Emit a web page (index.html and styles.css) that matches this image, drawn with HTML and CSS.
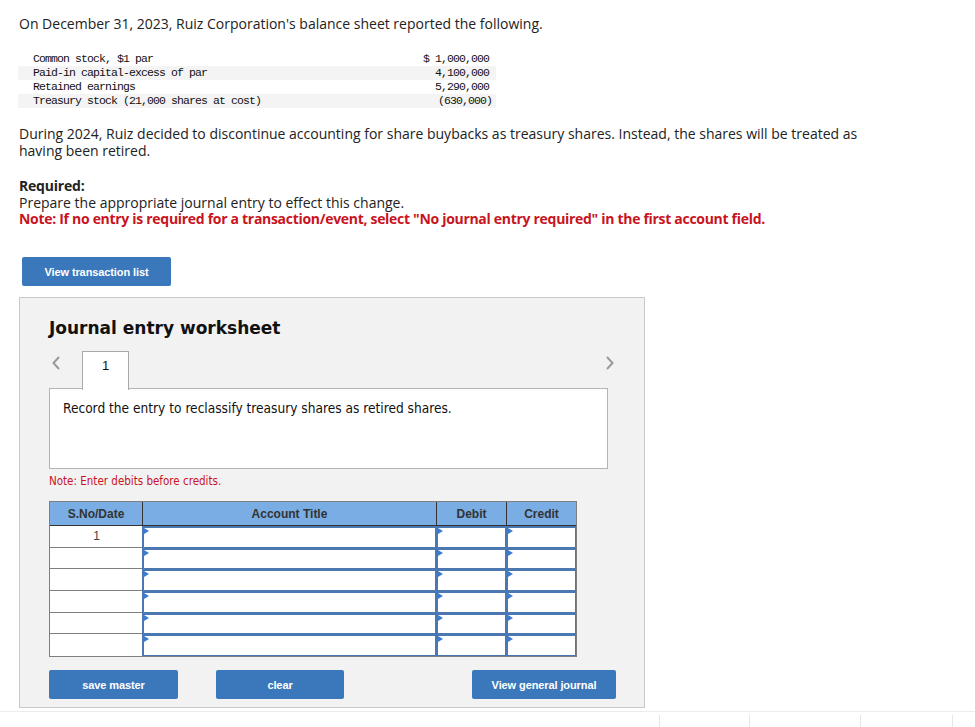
FILE: index.html
```html
<!DOCTYPE html>
<html>
<head>
<meta charset="utf-8">
<link rel="stylesheet" href="styles.css">
</head>
<body>
<div class="page">
  <p class="intro">On December 31, 2023, Ruiz Corporation's balance sheet reported the following.</p>
  <table class="bs">
    <tr><td class="lbl">Common stock, $1 par</td><td class="amt">$ 1,000,000</td></tr>
    <tr class="alt"><td class="lbl">Paid-in capital-excess of par</td><td class="amt">4,100,000</td></tr>
    <tr><td class="lbl">Retained earnings</td><td class="amt">5,290,000</td></tr>
    <tr class="alt"><td class="lbl">Treasury stock (21,000 shares at cost)</td><td class="amt"><span class="neg">(630,000)</span></td></tr>
  </table>
  <p class="para">During 2024, Ruiz decided to discontinue accounting for share buybacks as treasury shares. Instead, the shares will be treated as having been retired.</p>
  <div class="req">
    <p class="req-h">Required:</p>
    <p>Prepare the appropriate journal entry to effect this change.</p>
    <p class="note">Note: If no entry is required for a transaction/event, select "No journal entry required" in the first account field.</p>
  </div>
  <button class="btn btn-list">View transaction list</button>
  <section class="ws">
    <h2 class="ws-title">Journal entry worksheet</h2>
    <div class="nav">
      <svg class="arrow arrow-left" width="10" height="16" viewBox="0 0 10 16"><path d="M8 2 L2.5 8 L8 14" fill="none" stroke="#9a9a9a" stroke-width="2"/></svg>
      <div class="tab">1</div>
      <svg class="arrow arrow-right" width="10" height="16" viewBox="0 0 10 16"><path d="M2 2 L7.5 8 L2 14" fill="none" stroke="#9a9a9a" stroke-width="2"/></svg>
    </div>
    <div class="desc">Record the entry to reclassify treasury shares as retired shares.</div>
    <p class="ws-note">Note: Enter debits before credits.</p>
    <div class="jt">
      <div class="jrow jhead">
        <div class="hc">S.No/Date</div>
        <div class="hc">Account Title</div>
        <div class="hc">Debit</div>
        <div class="hc">Credit</div>
      </div>
      <div class="jrow"><div class="dc">1</div><div class="ic"></div><div class="ic"></div><div class="ic"></div></div>
      <div class="jrow"><div class="dc"></div><div class="ic"></div><div class="ic"></div><div class="ic"></div></div>
      <div class="jrow"><div class="dc"></div><div class="ic"></div><div class="ic"></div><div class="ic"></div></div>
      <div class="jrow"><div class="dc"></div><div class="ic"></div><div class="ic"></div><div class="ic"></div></div>
      <div class="jrow"><div class="dc"></div><div class="ic"></div><div class="ic"></div><div class="ic"></div></div>
      <div class="jrow"><div class="dc"></div><div class="ic"></div><div class="ic"></div><div class="ic"></div></div>
    </div>
    <div class="actions">
      <button class="btn btn-save">save master</button>
      <button class="btn btn-clear">clear</button>
      <button class="btn btn-view">View general journal</button>
    </div>
  </section>
</div>
<div class="footer">
  <div class="fcell f1"></div>
  <div class="fcell f2"></div>
  <div class="fcell f3"></div>
  <div class="fcell f4"></div>
</div>
</body>
</html>
```

FILE: styles.css
```css
html, body {
  margin: 0;
  padding: 0;
  background: #fff;
}
body {
  font-family: "Open Sans", "Liberation Sans", sans-serif;
  color: #222;
}
.page {
  padding: 15px 0 0 19px;
}
p {
  margin: 0;
}
.intro {
  font-size: 14px;
  line-height: 17px;
}
.bs {
  margin-top: 20px;
  border-collapse: collapse;
  width: 478px;
  margin-left: -1px;
  font-family: "Liberation Mono", "DejaVu Sans Mono", monospace;
  font-size: 11.5px;
  letter-spacing: -0.9px;
  color: #111;
}
.bs td {
  padding: 0;
  height: 14px;
  line-height: 14px;
  white-space: pre;
}
.bs .lbl {
  padding-left: 15px;
}
.bs .amt {
  text-align: right;
  padding-right: 7px;
}
.bs .alt td {
  background: #f4f4f4;
}
.neg {
  margin-right: -3px;
}
.para {
  margin-top: 17px;
  width: 870px;
  font-size: 14px;
  line-height: 17px;
}
.req {
  margin-top: 18px;
  font-size: 14px;
  line-height: 17px;
}
.req-h {
  font-weight: bold;
  letter-spacing: -0.2px;
}
.note {
  color: #c8141e;
  font-weight: bold;
  letter-spacing: -0.3px;
  line-height: 16px;
}
.btn {
  display: block;
  flex-shrink: 0;
  border: none;
  border-radius: 2px;
  background: #3b77bb;
  color: #fff;
  font-family: "Liberation Sans", Arial, sans-serif;
  font-weight: bold;
  font-size: 11px;
  letter-spacing: -0.1px;
  height: 29px;
  padding: 0;
  cursor: pointer;
}
.btn-list {
  margin: 30px 0 0 3px;
  width: 149px;
}
.ws {
  box-sizing: border-box;
  margin-top: 11px;
  width: 626px;
  background: #f2f2f2;
  border: 1px solid #c9c9c9;
  padding: 20px 37px 8px 29px;
}
.ws-title {
  margin: 0;
  font-family: "DejaVu Sans", Verdana, sans-serif;
  font-size: 17px;
  font-weight: bold;
  line-height: 20px;
  color: #111;
}
.nav {
  display: flex;
  align-items: flex-start;
  margin-top: 13px;
  height: 38px;
}
.arrow {
  margin-top: 4px;
}
.arrow-left {
  margin-left: 2px;
}
.tab {
  position: relative;
  z-index: 1;
  box-sizing: border-box;
  width: 47px;
  height: 39px;
  margin-left: 21px;
  background: #fff;
  border: 1px solid #a9a9a9;
  border-bottom: none;
  text-align: center;
  font-family: "Liberation Sans", Arial, sans-serif;
  font-size: 13px;
  padding-top: 6px;
  color: #111;
}
.arrow-right {
  margin-left: auto;
  margin-right: -8px;
}
.desc {
  box-sizing: border-box;
  width: 559px;
  height: 81px;
  margin-top: -1px;
  background: #fff;
  border: 1px solid #b4b4b4;
  padding: 11px 13px;
  font-family: "DejaVu Sans Condensed", "DejaVu Sans", Tahoma, sans-serif;
  font-size: 13.6px;
  line-height: 17px;
  color: #111;
}
.ws-note {
  margin-top: 6px;
  font-family: "DejaVu Sans Condensed", "DejaVu Sans", Tahoma, sans-serif;
  font-size: 11.5px;
  line-height: 13px;
  color: #c8141e;
}
.jt {
  margin-top: 13px;
  width: 528px;
  border: 1px solid #7f7f7f;
  box-sizing: border-box;
  background: #fff;
}
.jrow {
  display: grid;
  grid-template-columns: 92px 294px 70px 70px;
  height: 21.7px;
}
.jhead {
  height: 23px;
  background: #79ade4;
  border-bottom: 1px solid #333;
}
.hc {
  font-family: "Liberation Sans", Arial, sans-serif;
  font-size: 12px;
  font-weight: bold;
  color: #333;
  text-align: center;
  line-height: 24px;
  border-left: 1px solid #333;
}
.hc:first-child {
  border-left: none;
}
.dc {
  box-sizing: border-box;
  border-bottom: 1px solid #7f7f7f;
  font-family: "Liberation Sans", Arial, sans-serif;
  font-size: 12px;
  color: #444;
  text-align: center;
  line-height: 20px;
  padding-left: 1px;
}
.jrow:last-child .dc {
  border-bottom: none;
}
.ic {
  position: relative;
  box-sizing: border-box;
  border-style: solid;
  border-color: #4b78b0;
  border-width: 2px 1px 1px 2px;
  background: #fff;
}
.ic::before {
  content: "";
  position: absolute;
  left: 0;
  top: 0;
  border-top: 3px solid transparent;
  border-bottom: 3px solid transparent;
  border-left: 5px solid #3b7cd0;
}
.actions {
  display: flex;
  margin-top: 13px;
}
.btn-save {
  width: 129px;
}
.btn-clear {
  width: 128px;
  margin-left: 38px;
}
.btn-view {
  width: 144px;
  margin-left: 128px;
}
.footer {
  display: flex;
  margin-top: 3px;
  border-top: 1px solid #ececec;
  height: 15px;
}
.fcell {
  margin-top: 3px;
  border-right: 1px solid #e6e6e6;
}
.f1 { width: 659px; }
.f2 { width: 89px; }
.f3 { width: 110px; }
.f4 { width: 91px; }
```
